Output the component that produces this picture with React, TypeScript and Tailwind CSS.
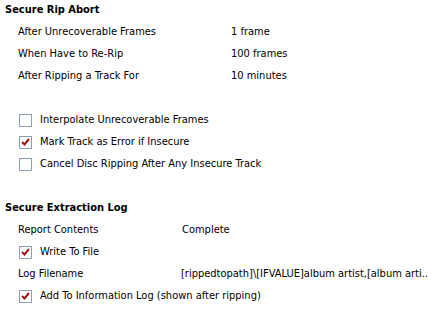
import React from "react";

function Check({ checked }: { checked?: boolean }) {
  return (
    <span className="w-[13px] h-[13px] border border-[#8f9fb3] bg-white flex items-center justify-center shrink-0">
      {checked && (
        <svg width="9" height="8" viewBox="0 0 9 8">
          <path d="M1 4 L3.5 6.5 L8 1" fill="none" stroke="#a0151a" strokeWidth="2" />
        </svg>
      )}
    </span>
  );
}

function Heading({ children }: { children: React.ReactNode }) {
  return <div className="h-[22px] flex items-center pl-[5px] font-bold">{children}</div>;
}

function Row({ label, value, col }: { label: string; value: string; col: string }) {
  return (
    <div className="h-[22px] flex items-center pl-[18px]">
      <span className={col}>{label}</span>
      <span className="whitespace-nowrap">{value}</span>
    </div>
  );
}

function CheckRow({ label, checked }: { label: string; checked?: boolean }) {
  return (
    <div className="h-[22px] flex items-center pl-[19px] gap-[8px]">
      <Check checked={checked} />
      <span>{label}</span>
    </div>
  );
}

export default function App() {
  return (
    <div
      className="w-[428px] h-[320px] bg-white text-black text-[11px] overflow-hidden"
      style={{ fontFamily: '"DejaVu Sans Condensed", "Liberation Sans", Arial, sans-serif' }}
    >
      <div className="-mt-[1px]">
        <Heading>Secure Rip Abort</Heading>
        <Row label="After Unrecoverable Frames" value="1 frame" col="w-[213px]" />
        <Row label="When Have to Re-Rip" value="100 frames" col="w-[213px]" />
        <Row label="After Ripping a Track For" value="10 minutes" col="w-[213px]" />
        <div className="h-[22px]" />
        <CheckRow label="Interpolate Unrecoverable Frames" />
        <CheckRow label="Mark Track as Error if Insecure" checked />
        <CheckRow label="Cancel Disc Ripping After Any Insecure Track" />
        <div className="h-[22px]" />
        <Heading>Secure Extraction Log</Heading>
        <Row label="Report Contents" value="Complete" col="w-[164px]" />
        <CheckRow label="Write To File" checked />
        <Row
          label="Log Filename"
          value="[rippedtopath]\[IFVALUE]album artist,[album arti.."
          col="w-[164px]"
        />
        <CheckRow label="Add To Information Log (shown after ripping)" checked />
      </div>
    </div>
  );
}
